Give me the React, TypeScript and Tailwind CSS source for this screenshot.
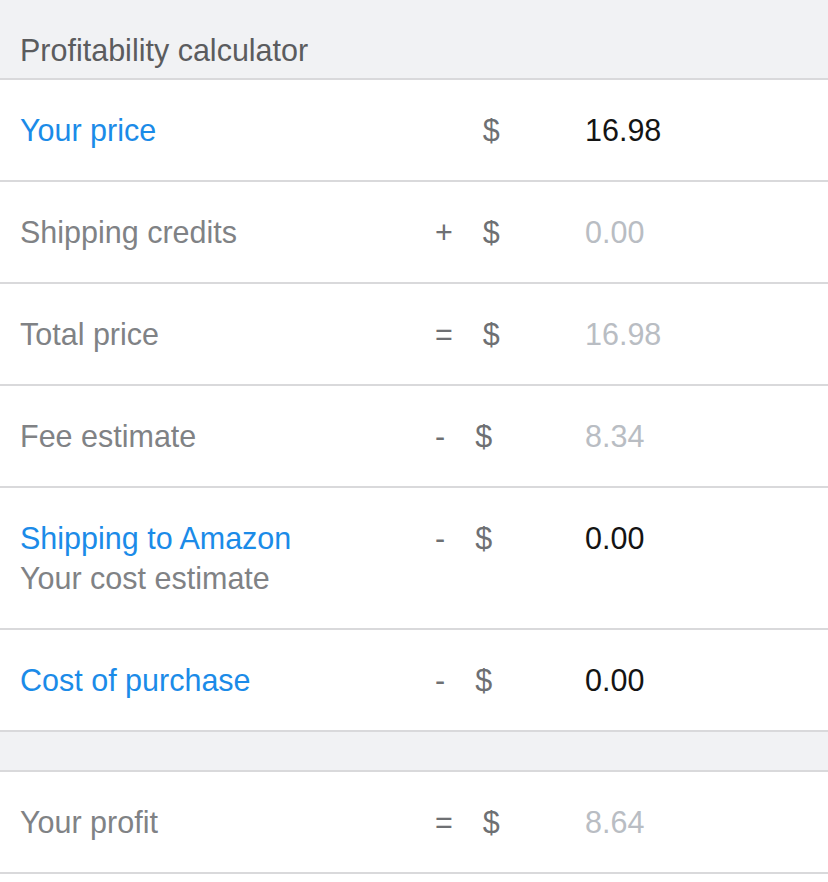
type Row = {
  label: string;
  sub?: string;
  link?: boolean;
  op?: string;
  value: string;
  input?: boolean;
};

const rows: Row[] = [
  { label: "Your price", link: true, value: "16.98", input: true },
  { label: "Shipping credits", op: "+", value: "0.00" },
  { label: "Total price", op: "=", value: "16.98" },
  { label: "Fee estimate", op: "-", value: "8.34" },
  { label: "Shipping to Amazon", sub: "Your cost estimate", link: true, op: "-", value: "0.00", input: true },
  { label: "Cost of purchase", link: true, op: "-", value: "0.00", input: true },
];

function CalcRow({ row }: { row: Row }) {
  return (
    <div
      className={`flex items-start border-b-2 border-[#d9d9db] bg-white pl-5 pt-[31px] ${
        row.sub ? "h-[142px]" : "h-[102px]"
      }`}
    >
      <div className="w-[415px] shrink-0 leading-[38px]">
        <div className={row.link ? "text-[#1b8be8]" : "text-[#808285]"}>{row.label}</div>
        {row.sub && <div className="mt-[2px] text-[#808285]">{row.sub}</div>}
      </div>
      <div className="flex w-[150px] shrink-0 leading-[38px] text-[#6e7073]">
        <span className={row.op ? "" : "invisible"}>{row.op ?? "+"}</span>
        <span className="ml-[30px]">$</span>
      </div>
      <div className={`leading-[38px] ${row.input ? "text-[#141414]" : "text-[#b9bdc3]"}`}>{row.value}</div>
    </div>
  );
}

export default function App() {
  return (
    <div
      className="min-h-screen w-[828px] bg-white text-[30.5px]"
      style={{ fontFamily: '"Liberation Sans", Arial, sans-serif' }}
    >
      <div className="flex h-[80px] items-end border-b-2 border-[#d9d9db] bg-[#f1f2f4] pb-[4px] pl-5 text-[#5b5c5e]">
        Profitability calculator
      </div>
      {rows.map((r) => (
        <CalcRow key={r.label} row={r} />
      ))}
      <div className="h-[40px] border-b-2 border-[#d9d9db] bg-[#f1f2f4]" />
      <CalcRow row={{ label: "Your profit", op: "=", value: "8.64" }} />
    </div>
  );
}
